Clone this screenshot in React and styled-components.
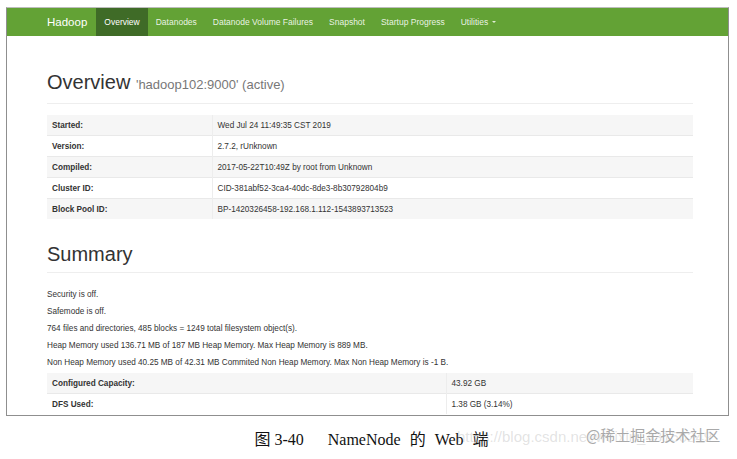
import React from "react";
import styled, { createGlobalStyle } from "styled-components";

const Global = createGlobalStyle`
  html, body { margin: 0; padding: 0; background: #fff; }
  body { font-family: "Liberation Sans", Arial, sans-serif; }
`;

const Page = styled.div`
  width: 737px;
  height: 459px;
  box-sizing: border-box;
  padding: 7px 0 0 6px;
  position: relative;
  overflow: hidden;
  background: #fff;
`;

const Frame = styled.div`
  width: 723px;
  height: 409px;
  box-sizing: border-box;
  border: 1px solid #8f8f8f;
  border-top-color: #bdbdbd;
  overflow: hidden;
  background: #fff;
`;

const Navbar = styled.nav`
  height: 28px;
  background: #63a235;
  display: flex;
  align-items: stretch;
  padding-left: 40px;
`;

const Brand = styled.div`
  display: flex;
  align-items: center;
  color: #fff;
  font-size: 11.5px;
  padding-right: 9px;
`;

const NavItem = styled.div`
  display: flex;
  align-items: center;
  padding: 0 8px;
  font-size: 8.5px;
  color: ${(p) => (p.$active ? "#fff" : "rgba(255,255,255,0.88)")};
  background: ${(p) => (p.$active ? "#3f6b27" : "transparent")};
`;

const Caret = styled.span`
  display: inline-block;
  margin-left: 4px;
  width: 0;
  height: 0;
  border-left: 2px solid transparent;
  border-right: 2px solid transparent;
  border-top: 2px solid rgba(255,255,255,0.8);
`;

const Container = styled.div`
  width: 646px;
  padding-left: 40px;
`;

const PageHeader = styled.div`
  margin-top: ${(p) => p.$top}px;
  padding-bottom: ${(p) => p.$pb}px;
  border-bottom: 1px solid #eeeeee;
`;

const Title = styled.h1`
  margin: 0;
  font-weight: normal;
  font-size: 20px;
  line-height: 24px;
  color: #333;
`;

const Sub = styled.small`
  font-size: 13px;
  color: #777;
`;

const Table = styled.table`
  width: 646px;
  border-collapse: collapse;
  margin-top: ${(p) => p.$top}px;
  font-size: 8.2px;
  color: #333;
`;

const Row = styled.tr`
  background: ${(p) => (p.$odd ? "#f6f6f6" : "#fff")};
  border-top: 1px solid #e9e9e9;
  &:first-child { border-top: none; }
`;

const Th = styled.th`
  text-align: left;
  font-weight: bold;
  width: ${(p) => p.$w}px;
  height: 20px;
  padding: 0 0 0 5px;
  box-sizing: border-box;
  border-right: 1px solid #ededed;
`;

const Td = styled.td`
  height: 20px;
  padding: 0 0 0 5px;
`;

const Lines = styled.div`
  margin-top: 13px;
  font-size: 8.2px;
  line-height: 17px;
  color: #333;
`;

const Caption = styled.div`
  display: flex;
  justify-content: center;
  align-items: baseline;
  gap: 24px;
  margin-top: 10px;
  font-family: "Liberation Serif", "Noto Sans CJK SC", serif;
  font-size: 16px;
  color: #111;
  white-space: pre;
`;

const CapWord = styled.span`
  word-spacing: 5px;
`;

const WaterUrl = styled.div`
  position: absolute;
  left: 457px;
  top: 428px;
  font-family: "Liberation Sans", Arial, sans-serif;
  font-size: 15px;
  color: rgba(160, 160, 160, 0.3);
  white-space: nowrap;
`;

const WaterMark = styled.div`
  position: absolute;
  left: 586px;
  top: 424px;
  font-family: "Noto Sans CJK SC", sans-serif;
  font-size: 15px;
  color: #a9a9a9;
  text-shadow: 0 0 2px #fff, 0 0 1px #fff;
  white-space: nowrap;
`;

const overview = [
  ["Started:", "Wed Jul 24 11:49:35 CST 2019"],
  ["Version:", "2.7.2, rUnknown"],
  ["Compiled:", "2017-05-22T10:49Z by root from Unknown"],
  ["Cluster ID:", "CID-381abf52-3ca4-40dc-8de3-8b30792804b9"],
  ["Block Pool ID:", "BP-1420326458-192.168.1.112-1543893713523"],
];

const summary = [
  ["Configured Capacity:", "43.92 GB"],
  ["DFS Used:", "1.38 GB (3.14%)"],
];

const navs = ["Datanodes", "Datanode Volume Failures", "Snapshot", "Startup Progress"];

export default function App() {
  return (
    <>
      <Global />
      <Page>
        <Frame>
          <Navbar>
            <Brand>Hadoop</Brand>
            <NavItem $active>Overview</NavItem>
            {navs.map((n) => (
              <NavItem key={n}>{n}</NavItem>
            ))}
            <NavItem>
              Utilities <Caret />
            </NavItem>
          </Navbar>
          <Container>
            <PageHeader $top={34} $pb={6}>
              <Title>
                Overview <Sub>'hadoop102:9000' (active)</Sub>
              </Title>
            </PageHeader>
            <Table $top={11}>
              <tbody>
                {overview.map(([k, v], i) => (
                  <Row key={k} $odd={i % 2 === 0}>
                    <Th $w={165}>{k}</Th>
                    <Td>{v}</Td>
                  </Row>
                ))}
              </tbody>
            </Table>
            <PageHeader $top={23} $pb={6}>
              <Title>Summary</Title>
            </PageHeader>
            <Lines>
              <div>Security is off.</div>
              <div>Safemode is off.</div>
              <div>764 files and directories, 485 blocks = 1249 total filesystem object(s).</div>
              <div>Heap Memory used 136.71 MB of 187 MB Heap Memory. Max Heap Memory is 889 MB.</div>
              <div>Non Heap Memory used 40.25 MB of 42.31 MB Commited Non Heap Memory. Max Non Heap Memory is -1 B.</div>
            </Lines>
            <Table $top={2}>
              <tbody>
                {summary.map(([k, v], i) => (
                  <Row key={k} $odd={i % 2 === 0}>
                    <Th $w={399}>{k}</Th>
                    <Td>{v}</Td>
                  </Row>
                ))}
              </tbody>
            </Table>
          </Container>
        </Frame>
        <Caption>
          <span>图 3-40</span>
          <CapWord>NameNode 的 Web 端</CapWord>
        </Caption>
        <WaterUrl>https://blog.csdn.net/weixin_43156249</WaterUrl>
        <WaterMark>@稀土掘金技术社区</WaterMark>
      </Page>
    </>
  );
}
